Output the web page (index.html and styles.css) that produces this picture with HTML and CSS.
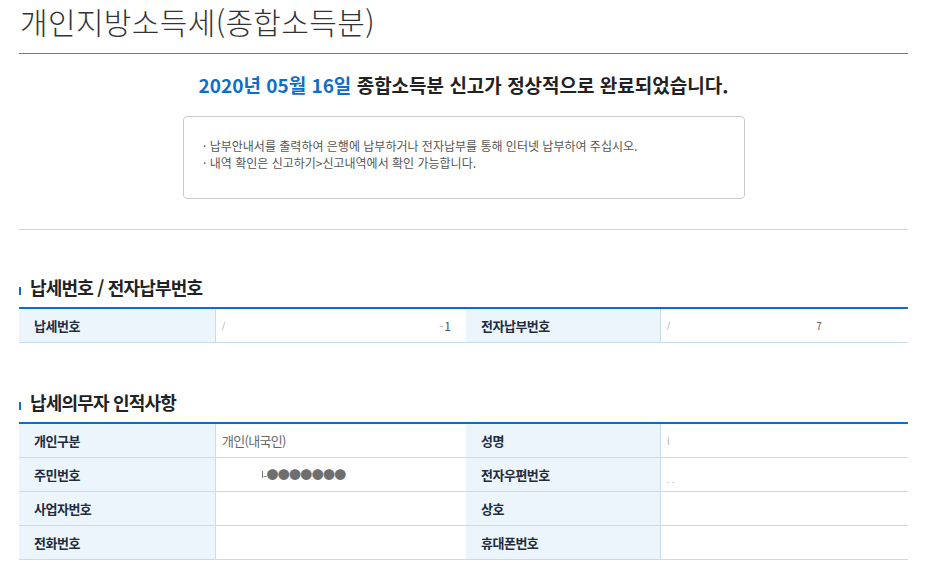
FILE: index.html
```html
<!DOCTYPE html>
<html lang="ko">
<head>
<meta charset="utf-8">
<title>개인지방소득세(종합소득분)</title>
<link rel="stylesheet" href="styles.css">
</head>
<body>
<div class="wrap">
  <h1 class="page-title">개인지방소득세(종합소득분)</h1>

  <p class="done"><span class="date">2020년 05월 16일</span> 종합소득분 신고가 정상적으로 완료되었습니다.</p>

  <div class="notice">
    <p>· 납부안내서를 출력하여 은행에 납부하거나 전자납부를 통해 인터넷 납부하여 주십시오.</p>
    <p>· 내역 확인은 신고하기&gt;신고내역에서 확인 가능합니다.</p>
  </div>

  <div class="sep"></div>

  <h2 class="sec-title">납세번호 / 전자납부번호</h2>
  <div class="grid">
    <div class="th">납세번호</div>
    <div class="td split"><span class="mark">/</span><span class="tail"><span class="faint">-</span>1</span></div>
    <div class="th">전자납부번호</div>
    <div class="td"><span class="mark">/</span><span class="mark seven">7</span></div>
  </div>

  <h2 class="sec-title second">납세의무자 인적사항</h2>
  <div class="grid">
    <div class="th">개인구분</div>
    <div class="td val">개인(내국인)</div>
    <div class="th">성명</div>
    <div class="td"><span class="mark">(</span></div>

    <div class="th">주민번호</div>
    <div class="td"><span class="masked"><span class="cut"></span>-●●●●●●●</span></div>
    <div class="th">전자우편번호</div>
    <div class="td"><span class="dots">. .</span></div>

    <div class="th">사업자번호</div>
    <div class="td"></div>
    <div class="th">상호</div>
    <div class="td"></div>

    <div class="th">전화번호</div>
    <div class="td"></div>
    <div class="th">휴대폰번호</div>
    <div class="td"></div>
  </div>
</div>
</body>
</html>
```

FILE: styles.css
```css
html, body {
  margin: 0;
  padding: 0;
  background: #ffffff;
}

body {
  font-family: "Noto Sans CJK KR", "Noto Sans", sans-serif;
  color: #333333;
}

.wrap {
  margin-left: 19px;
  width: 889px;
}

.page-title {
  margin: 0;
  padding: 1px 0 12px 1px;
  font-size: 30px;
  font-weight: 300;
  line-height: 40px;
  letter-spacing: 0.35px;
  color: #333333;
  border-bottom: 1px solid #777777;
}

.done {
  margin: 17px 0 0 0;
  text-align: center;
  font-size: 19px;
  font-weight: 700;
  line-height: 28px;
  letter-spacing: 0;
  color: #222222;
}

.done .date {
  color: #0d6fc8;
}

.notice {
  margin: 17px 0 0 164px;
  width: 560px;
  height: 81px;
  box-sizing: content-box;
  border: 1px solid #cccccc;
  border-radius: 4px;
}

.notice p {
  margin: 0;
  font-size: 12px;
  line-height: 17px;
  letter-spacing: 0;
  color: #555555;
  padding-left: 19px;
}

.notice p:first-child {
  padding-top: 20px;
}

.sep {
  margin-top: 30px;
  border-top: 1px solid #d6d6d6;
}

.sec-title {
  display: flex;
  align-items: center;
  margin: 45px 0 8px 0;
  font-size: 18px;
  font-weight: 700;
  line-height: 24px;
  letter-spacing: -0.8px;
  color: #222222;
}

.sec-title::before {
  content: "";
  display: block;
  width: 2px;
  height: 8px;
  margin-top: 8px;
  margin-right: 9px;
  background: #0d6fc8;
}

.sec-title.second {
  margin-top: 47px;
}

.grid {
  display: grid;
  grid-template-columns: 197px 250px 195px 247px;
  border-top: 2px solid #0a70c6;
}

.th,
.td {
  height: 33px;
  border-bottom: 1px solid #c6dcf0;
  display: flex;
  align-items: center;
  font-size: 13px;
}

.th {
  background: #edf5fc;
  border-right: 1px solid #c6dcf0;
  padding-left: 15px;
  font-weight: 700;
  letter-spacing: -0.5px;
  color: #222b3c;
}

.td {
  padding-left: 6px;
  color: #666666;
  background: #ffffff;
  letter-spacing: -0.7px;
}

.td.split {
  justify-content: space-between;
  padding-right: 15px;
}

.mark {
  font-size: 8px;
  color: #8a8a8a;
  letter-spacing: 0;
}

.mark.seven {
  margin-left: 146px;
  font-size: 10px;
  color: #556;
}

.tail {
  font-size: 12px;
  color: #555555;
  letter-spacing: 0;
}

.faint {
  color: #aaaaaa;
  margin-right: 1px;
}

.masked {
  margin-left: 40px;
  display: flex;
  align-items: center;
  font-size: 12px;
  letter-spacing: -0.7px;
  color: #6e6e6e;
}

.cut {
  display: inline-block;
  width: 1px;
  height: 7px;
  background: #777777;
}

.dots {
  font-size: 9px;
  color: #aaaaaa;
  margin-top: 10px;
  letter-spacing: 0;
}
```
